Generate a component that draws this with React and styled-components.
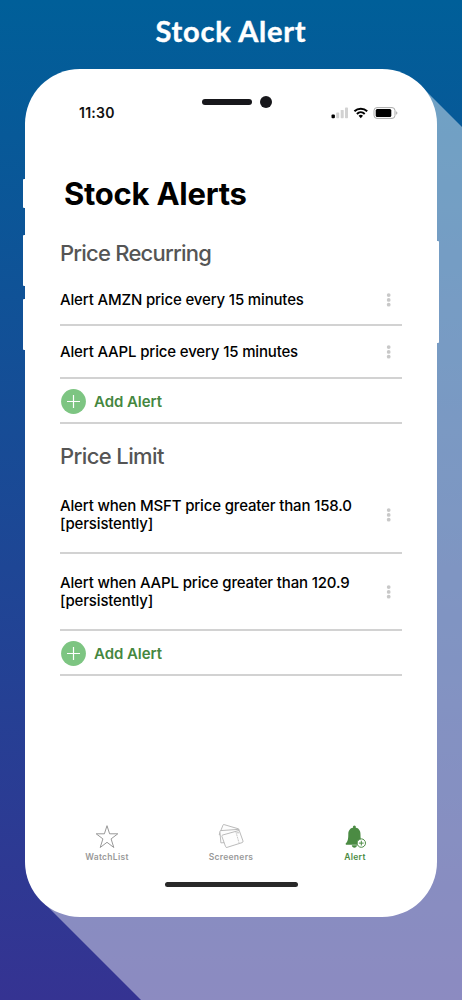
import React from "react";
import styled, { createGlobalStyle } from "styled-components";

const GlobalStyle = createGlobalStyle`
  * {
    box-sizing: border-box;
  }

  body {
    margin: 0;
    font-family: Inter, "Liberation Sans", sans-serif;
  }
`;

const Page = styled.div`
  position: relative;
  width: 462px;
  height: 1000px;
  overflow: hidden;
  background: linear-gradient(#005f99, #353392);
`;

const LongShadow = styled.div`
  position: absolute;
  inset: 0;
  background: rgba(255, 255, 255, 0.43);
  clip-path: polygon(422px 87px, 462px 127px, 462px 1000px, 141px 1000px, 45px 904px);
`;

const PageTitle = styled.h1`
  position: relative;
  height: 69px;
  margin: 0;
  padding-top: 12px;
  color: #fff;
  font-family: Lato, sans-serif;
  font-size: 29px;
  font-weight: 700;
  line-height: 38px;
  letter-spacing: 0.75px;
  text-align: center;
  -webkit-text-stroke: 0.4px #fff;
`;

const Phone = styled.main`
  position: relative;
  display: flex;
  flex-direction: column;
  width: 412px;
  height: 848px;
  margin-left: 25px;
  padding: 0 35px;
  background: #fff;
  border-radius: 55px;
`;

const SideButton = styled.span`
  position: absolute;
  ${({ $side }) => $side}: -2px;
  top: ${({ $top }) => $top}px;
  width: 4px;
  height: ${({ $height }) => $height}px;
  background: #fff;
  border-radius: 1px;
`;

const StatusBar = styled.div`
  display: flex;
  align-items: center;
  justify-content: space-between;
  height: 50px;
  margin-top: 19px;
  padding: 0 4px 0 19px;
`;

const Time = styled.span`
  margin-top: -1px;
  color: #111;
  font-size: 14px;
  font-weight: 600;
  letter-spacing: 0.25px;
`;

const Notch = styled.div`
  position: absolute;
  top: 27px;
  left: 177px;
  display: flex;
  align-items: center;
  gap: 8px;
`;

const Speaker = styled.span`
  width: 50px;
  height: 6px;
  border-radius: 3px;
  background: #17171b;
`;

const Camera = styled.span`
  width: 12px;
  height: 12px;
  border-radius: 50%;
  background: #17171b;
`;

const Heading = styled.h2`
  height: 40px;
  margin: 36px 0 0 4px;
  color: #000;
  font-size: 31px;
  font-weight: 700;
  line-height: 40px;
  white-space: nowrap;
  letter-spacing: -0.25px;
`;

const SectionTitle = styled.h3`
  height: ${({ $height }) => $height}px;
  margin: ${({ $top }) => $top}px 0 0;
  color: #555;
  font-size: 22px;
  font-weight: 450;
  line-height: 27px;
  letter-spacing: ${({ $spacing }) => $spacing}px;
`;

const Row = styled.div`
  display: flex;
  align-items: center;
  justify-content: space-between;
  height: ${({ $height }) => $height}px;
  padding: 1px 10px 0 0;
  border-bottom: 2px solid #d2d2d2;
`;

const RowText = styled.p`
  margin: 0;
  color: #000;
  font-size: 15px;
  font-weight: 500;
  line-height: 18px;
  letter-spacing: -0.16px;
  white-space: pre-line;
`;

const AddRow = styled.div`
  display: flex;
  align-items: center;
  gap: 8px;
  height: 45px;
  padding: 1px 0 0 1px;
  border-bottom: 2px solid #d2d2d2;
`;

const AddLabel = styled.span`
  color: #45873f;
  font-size: 15px;
  font-weight: 600;
  letter-spacing: -0.05px;
`;

const TabBar = styled.nav`
  display: grid;
  grid-template-columns: repeat(3, 124px);
  width: 372px;
  margin: auto 0 18px -15px;
`;

const Tab = styled.div`
  display: flex;
  flex-direction: column;
  align-items: center;
  color: ${({ $active }) => ($active ? "#4b8b43" : "#999")};
  font-size: 8.5px;
  font-weight: 600;
  line-height: 14px;
  letter-spacing: 0.3px;
`;

const HomeIndicator = styled.div`
  flex: none;
  width: 133px;
  height: 5px;
  margin: 0 auto 30px 105px;
  border-radius: 3px;
  background: #292929;
`;

const StatusIcons = () => (
  <svg width="67" height="14" viewBox="0 0 67 14">
    <rect x="0.5" y="8.5" width="3.4" height="3.7" rx="1" fill="#000" />
    <g fill="#d2d2d2">
      <rect x="5.2" y="6.4" width="3" height="5.8" rx="0.7" />
      <rect x="9.7" y="3.9" width="3" height="8.3" rx="0.7" />
      <rect x="14" y="1.6" width="3" height="10.6" rx="0.7" />
    </g>
    <g fill="none" stroke="#000" strokeWidth="2">
      <path d="M23.4 5.2a9.3 9.3 0 0 1 12.8 0" />
      <path d="M25.9 7.9a5.7 5.7 0 0 1 7.8 0" />
    </g>
    <path d="M27.6 9.8a3.3 3.3 0 0 1 4.4 0l-2.2 2.4z" fill="#000" />
    <rect x="43" y="1.6" width="21" height="10.8" rx="3" fill="#fff" stroke="#aaa" />
    <rect x="44.7" y="3" width="15.6" height="8" rx="1.5" fill="#000" />
    <path d="M65.2 5.2c1.6.5 1.6 3 0 3.5z" fill="#aaa" />
  </svg>
);

const DotsIcon = () => (
  <svg width="7" height="16" viewBox="0 0 7 16" fill="#c8c8c8">
    <circle cx="3.7" cy="3.1" r="1.9" />
    <circle cx="3.7" cy="7.9" r="1.9" />
    <circle cx="3.7" cy="12.7" r="1.9" />
  </svg>
);

const PlusIcon = () => (
  <svg width="25" height="25" viewBox="0 0 25 25">
    <circle cx="12.5" cy="12.5" r="12.4" fill="#7dc582" />
    <path d="M12.5 6v13M6 12.5h13" stroke="#fff" strokeWidth="1.2" />
  </svg>
);

const StarIcon = () => (
  <svg width="26" height="27" viewBox="0 0.5 26 27">
    <path
      d="M13 3.2l2.6 8.1h8.2l-6.7 5.1 2.7 8.6-6.8-5.2-6.8 5.2 2.7-8.6-6.7-5.1h8.2z"
      fill="none"
      stroke="#999"
      strokeWidth="1"
    />
  </svg>
);

const CardsIcon = () => (
  <svg width="26" height="27" viewBox="0 -0.5 26 27" strokeWidth="0.8" strokeLinejoin="round">
    <g fill="#fdfdfd" stroke="#aaa">
      <path d="M1.2 11.2 5 1.6Q5.3.8 6.1 1.1L20.4 5.3Q21.2 5.6 21 6.3L17.5 17z" />
      <path d="M2.9 19.4 1.9 8.2Q1.8 7.2 2.8 7.1L20 5.9Q21 5.9 21 7L21.4 18z" />
      <path d="M3.9 12.9Q3.7 11.8 4.7 11.5L20.2 7.2Q21.3 7 21.6 8L25 17.5Q25.3 18.7 24.2 19.1L9 23.9Q7.8 24.2 7.5 23z" />
    </g>
    <path d="M17.9 8.3 21.1 19.6" stroke="#bbb" strokeDasharray="2 0.6" />
    <circle cx="20" cy="9.2" r="0.7" fill="#aaa" />
  </svg>
);

const BellIcon = () => (
  <svg width="26" height="27" viewBox="0 -0.8 26 27">
    <g fill="#4b8b43">
      <circle cx="12.4" cy="3.3" r="1.5" />
      <path d="M12.4 3.8c-4 0-6.1 2.8-6.1 6.8 0 5.4-.9 7-2.4 8.9-.6.9-.2 1.5.8 1.5h15.4c1 0 1.4-.6.8-1.5-1.5-1.9-2.4-3.5-2.4-8.9 0-4-2.1-6.8-6.1-6.8z" />
      <path d="M9.8 21.5h5.2c0 3.1-5.2 3.1-5.2 0z" />
    </g>
    <circle cx="19.3" cy="19.3" r="4.2" fill="#fff" stroke="#4b8b43" />
    <path d="M19.3 16.9v4.8M16.9 19.3h4.8" stroke="#4b8b43" />
  </svg>
);

const AlertRow = ({ text, height }) => (
  <Row $height={height}>
    <RowText>{text}</RowText>
    <DotsIcon />
  </Row>
);

const AddAlert = () => (
  <AddRow>
    <PlusIcon />
    <AddLabel>Add Alert</AddLabel>
  </AddRow>
);

const App = () => {
  return (
    <Page>
      <GlobalStyle />
      <LongShadow />
      <PageTitle>Stock Alert</PageTitle>
      <Phone>
        <SideButton $side="left" $top={110} $height={29} />
        <SideButton $side="left" $top={166} $height={51} />
        <SideButton $side="left" $top={230} $height={51} />
        <SideButton $side="right" $top={172} $height={102} />
        <Notch>
          <Speaker />
          <Camera />
        </Notch>
        <StatusBar>
          <Time>11:30</Time>
          <StatusIcons />
        </StatusBar>
        <Heading>Stock Alerts</Heading>
        <SectionTitle $top={26} $height={34} $spacing={-0.78}>Price Recurring</SectionTitle>
        <AlertRow height={52} text="Alert AMZN price every 15 minutes" />
        <AlertRow height={53} text="Alert AAPL price every 15 minutes" />
        <AddAlert />
        <SectionTitle $top={19} $height={34} $spacing={-0.6}>Price Limit</SectionTitle>
        <AlertRow height={77} text={"Alert when MSFT price greater than 158.0\n[persistently]"} />
        <AlertRow height={77} text={"Alert when AAPL price greater than 120.9\n[persistently]"} />
        <AddAlert />
        <TabBar>
          <Tab>
            <StarIcon />
            WatchList
          </Tab>
          <Tab>
            <CardsIcon />
            Screeners
          </Tab>
          <Tab $active>
            <BellIcon />
            Alert
          </Tab>
        </TabBar>
        <HomeIndicator />
      </Phone>
    </Page>
  );
};

export default App;
